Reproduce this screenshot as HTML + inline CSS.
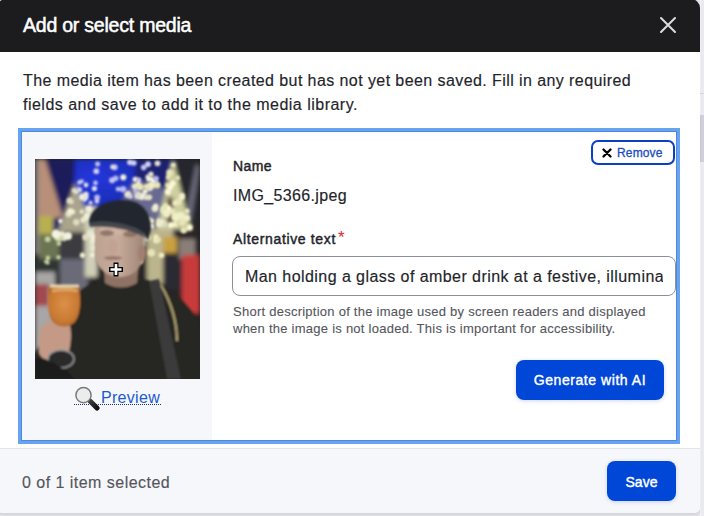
<!DOCTYPE html>
<html><head><meta charset="utf-8">
<style>
*{box-sizing:border-box;margin:0;padding:0}
html,body{width:704px;height:516px;overflow:hidden;background:#e3e3e9;font-family:"Liberation Sans",sans-serif;color:#232429}
.abs{position:absolute}
#strip1{left:700px;top:0;width:4px;height:516px;background:linear-gradient(90deg,#f4f4f8 0,#f4f4f8 1px,#eaeaf0 1px);}
#strip3{left:700px;top:93px;width:4px;height:1px;background:#d8d8de}
#strip2{left:700px;top:115px;width:4px;height:47px;background:#cfd0d8}
#dlg{left:-3px;top:-1px;width:703px;height:513.5px;background:#fff;border-radius:9px 9px 6px 6px;overflow:hidden;box-shadow:0 2px 3px rgba(20,20,40,.08)}
#w{left:3px;top:-1px;width:700px;height:516px}
#hdr{left:-3px;top:0;width:703px;height:54px;background:#1c1c1e}
#title{left:23px;top:16px;font-size:19.5px;letter-spacing:-0.22px;-webkit-text-stroke:0.5px #fff;color:#fff;line-height:22px;white-space:nowrap}
#close{left:660px;top:19px}
#msg{-webkit-text-stroke:0.15px #232429;left:23px;top:71px;font-size:16px;letter-spacing:0.42px;line-height:24px;white-space:nowrap;color:#232429}
#card{left:21px;top:133px;width:656px;height:310px;border:1px solid #4f88de;outline:3px solid #66a4f0}
#leftcol{left:0;top:0;width:190px;height:308px;background:#f5f7fb}
#photo{left:13px;top:27px;width:165px;height:220px;overflow:hidden;background:#222}
.lbl{-webkit-text-stroke:0.45px #232429;font-size:14px;white-space:nowrap;color:#232429}
#ftr{left:-3px;top:450px;width:703px;height:70px;background:#f6f7fb;border-top:1px solid #e3e4ea}
.btn{background:#0047d8;color:#fff;border-radius:8px;-webkit-text-stroke:0.4px #fff;font-size:14px;text-align:center;white-space:nowrap;box-shadow:0 1px 4px rgba(0,40,160,.18)}
#count{-webkit-text-stroke:0.15px #55565c;left:25px;top:23.5px;letter-spacing:0.47px;font-size:16px;line-height:20px;color:#55565c;white-space:nowrap}
#save{left:610px;top:12px;width:69px;height:40px;line-height:42px}
#gen{left:494px;top:228px;width:148px;height:40px;line-height:40px;letter-spacing:0.55px}
#remove{left:569px;top:8px;width:84px;height:25px;border:2px solid #0a3fc9;border-radius:7px;background:#fff}
#remtxt{-webkit-text-stroke:0.3px #1f4fc6;letter-spacing:0.15px;position:absolute;left:24px;top:4px;font-size:12px;line-height:14px;color:#1a4cc4;white-space:nowrap}
#lname{left:211px;top:26px;line-height:16px;letter-spacing:0.4px}
#fname{-webkit-text-stroke:0.15px #232429;left:211px;top:55px;font-size:16px;letter-spacing:0.35px;line-height:18px;white-space:nowrap}
#lalt{left:211px;top:99px;line-height:16px;letter-spacing:0.65px}
#req{color:#d42a2a;-webkit-text-stroke:0;font-size:17px;letter-spacing:0;position:absolute;top:-1.5px;left:105px}
#inp{left:210px;top:124px;width:444px;height:40px;border:1px solid #8d9099;border-radius:8px;overflow:hidden;padding:0 12px}
#inptxt{-webkit-text-stroke:0.15px #232429;font-size:16px;letter-spacing:0.44px;padding-top:1px;line-height:38px;white-space:nowrap;overflow:hidden;color:#232429}
#desc{-webkit-text-stroke:0.1px #55565c;left:211px;top:171px;letter-spacing:0.25px;font-size:13px;line-height:17px;color:#55565c;white-space:nowrap}
#preview{left:52px;top:254px;white-space:nowrap;height:19px;width:87px;border-bottom:1px dotted #1c2f80}
#prevtxt{position:absolute;left:27px;top:2px;letter-spacing:0.3px;font-size:16px;line-height:20px;color:#1d5bd1}
#mag{position:absolute;left:0px;top:0px}
</style></head><body>
<div class="abs" id="strip1"></div>
<div class="abs" id="strip2"></div>
<div class="abs" id="strip3"></div>
<div class="abs" id="dlg"><div class="abs" id="w">
  <div class="abs" id="hdr"></div>
  <div class="abs" id="title">Add or select media</div>
  <svg class="abs" id="close" width="16" height="16" viewBox="0 0 16 16"><path d="M1 1L15 15M15 1L1 15" stroke="#dcdcdc" stroke-width="2" stroke-linecap="round"/></svg>
  <div class="abs" id="msg">The media item has been created but has not yet been saved. Fill in any required<br><span style="letter-spacing:0.49px">fields and save to add it to the media library.</span></div>
  <div class="abs" id="card">
    <div class="abs" id="leftcol">
      <div class="abs" id="photo"><svg width="165" height="220" viewBox="0 0 165 220">
<defs>
<filter id="b1" x="-10%" y="-10%" width="120%" height="120%"><feGaussianBlur stdDeviation="2.2"/></filter>
<filter id="b2" x="-10%" y="-10%" width="120%" height="120%"><feGaussianBlur stdDeviation="1.1"/></filter>
<filter id="b3" x="-50%" y="-50%" width="200%" height="200%"><feGaussianBlur stdDeviation="1"/></filter>
<radialGradient id="glass" cx="0.5" cy="0.45" r="0.6"><stop offset="0" stop-color="#dc9048"/><stop offset="0.75" stop-color="#c87832"/><stop offset="1" stop-color="#a86024"/></radialGradient>
<linearGradient id="face" x1="0" y1="0" x2="1" y2="0"><stop offset="0" stop-color="#bca290"/><stop offset="0.45" stop-color="#c8ac9c"/><stop offset="1" stop-color="#a08676"/></linearGradient>
<radialGradient id="sky" cx="0.42" cy="0.25" r="0.6"><stop offset="0" stop-color="#2236dc"/><stop offset="0.7" stop-color="#1c2cb0"/><stop offset="1" stop-color="#1a1c68"/></radialGradient>
</defs>
<g filter="url(#b1)">
<rect width="165" height="220" fill="#2a2826"/>
<!-- sky -->
<rect x="0" y="0" width="140" height="75" fill="url(#sky)"/>
<polygon points="8,0 40,0 38,55 28,60" fill="#1a1c5a"/>
<rect x="100" y="0" width="35" height="70" fill="#1e2070"/>
<polygon points="70,72 100,20 130,30 135,72" fill="#6a6a90"/>
<rect x="140" y="0" width="25" height="65" fill="#26262e"/>
<polygon points="161,5 165,8 156,62 150,60" fill="#6a6a7a"/>
<!-- tan roof left -->
<polygon points="0,0 10,0 28,58 0,62" fill="#b89078"/>
<rect x="0" y="0" width="4" height="95" fill="#8a8680"/>
<!-- lit tent left -->
<polygon points="40,24 20,80 62,80" fill="#aaa48c"/>
<!-- right tree -->
<polygon points="138,0 122,70 156,70" fill="#cfd0a0"/>
<rect x="132" y="38" width="6" height="28" fill="#5a3a34"/>
<!-- left bush / building -->
<rect x="4" y="57" width="14" height="18" fill="#b8b050"/>
<rect x="4" y="75" width="22" height="35" fill="#6c7452"/>
<rect x="0" y="100" width="28" height="14" fill="#2e3430"/>
<!-- people left -->
<rect x="24" y="73" width="34" height="32" fill="#3a3a40"/>
<rect x="25" y="100" width="28" height="32" fill="#6a6a78"/>
<!-- ground -->
<rect x="0" y="113" width="20" height="80" fill="#a8a6a6"/>
<rect x="0" y="125" width="14" height="22" fill="#a04850"/>
<!-- light area right of head -->
<rect x="112" y="70" width="26" height="55" fill="#bcb48c"/>
<rect x="128" y="78" width="14" height="18" fill="#c8a040"/>
<rect x="128" y="94" width="22" height="36" fill="#2c2c30"/>
<rect x="144" y="80" width="16" height="20" fill="#8a7e78"/>
<rect x="147" y="96" width="18" height="58" fill="#c83a3a"/>
<!-- left bright near face -->
<rect x="50" y="48" width="12" height="70" fill="#d0d0b8"/>
</g>
<g filter="url(#b3)"><circle cx="115.9" cy="19.5" r="2.3" fill="#f2f0d8"/><circle cx="102.5" cy="37.0" r="3.2" fill="#e8e6c8"/><circle cx="104.4" cy="62.2" r="2.2" fill="#e8e6c8"/><circle cx="102.8" cy="59.1" r="3.0" fill="#e8e6c8"/><circle cx="97.3" cy="51.1" r="3.1" fill="#dcdcd0"/><circle cx="106.5" cy="37.6" r="3.5" fill="#f2f0d8"/><circle cx="110.1" cy="32.3" r="2.6" fill="#f2f0d8"/><circle cx="100.3" cy="20.3" r="2.6" fill="#f2f0d8"/><circle cx="127.1" cy="63.1" r="2.5" fill="#f2f0d8"/><circle cx="94.0" cy="70.9" r="2.3" fill="#e8e6c8"/><circle cx="114.9" cy="29.6" r="2.7" fill="#dcdcd0"/><circle cx="113.5" cy="20.8" r="2.3" fill="#f2f0d8"/><circle cx="114.3" cy="38.3" r="2.8" fill="#e8e6c8"/><circle cx="102.3" cy="71.9" r="2.5" fill="#f2f0d8"/><circle cx="88.3" cy="18.3" r="3.1" fill="#f2f0d8"/><circle cx="102.9" cy="35.6" r="3.5" fill="#dcdcd0"/><circle cx="118.6" cy="21.9" r="3.1" fill="#fffbe6"/><circle cx="123.8" cy="61.4" r="2.5" fill="#e8e6c8"/><circle cx="108.7" cy="36.5" r="2.3" fill="#f2f0d8"/><circle cx="78.2" cy="54.9" r="3.4" fill="#dcdcd0"/><circle cx="120.0" cy="49.6" r="3.5" fill="#e8e6c8"/><circle cx="112.9" cy="18.0" r="2.5" fill="#f2f0d8"/><circle cx="128.7" cy="52.1" r="3.0" fill="#e8e6c8"/><circle cx="102.1" cy="67.6" r="2.7" fill="#fffbe6"/><circle cx="94.8" cy="56.4" r="3.6" fill="#f2f0d8"/><circle cx="92.8" cy="35.3" r="3.5" fill="#e8e6c8"/><circle cx="115.9" cy="67.1" r="3.2" fill="#f2f0d8"/><circle cx="120.7" cy="47.2" r="2.7" fill="#f2f0d8"/><circle cx="129.5" cy="65.0" r="2.7" fill="#dcdcd0"/><circle cx="49.7" cy="41.0" r="2.1" fill="#c8c8f0"/><circle cx="46.8" cy="22.2" r="2.0" fill="#c8c8f0"/><circle cx="50.9" cy="35.4" r="2.9" fill="#e0e0f0"/><circle cx="59.7" cy="29.2" r="2.1" fill="#c8c8f0"/><circle cx="51.4" cy="38.8" r="2.3" fill="#e0e0f0"/><circle cx="51.0" cy="26.0" r="2.4" fill="#e0e0f0"/><circle cx="44.4" cy="30.8" r="2.8" fill="#c8c8f0"/><circle cx="59.4" cy="29.6" r="2.6" fill="#e0e0f0"/><circle cx="44.6" cy="23.4" r="2.4" fill="#c8c8f0"/><circle cx="55.6" cy="43.8" r="2.3" fill="#c8c8f0"/></g><g filter="url(#b3)"><circle cx="79.7" cy="8.3" r="3.0" fill="#c4c4f4"/><circle cx="113.0" cy="5.2" r="2.9" fill="#d0d0f0"/><circle cx="60.5" cy="23.9" r="2.3" fill="#c4c4f4"/><circle cx="94.9" cy="3.3" r="2.9" fill="#d0d0f0"/><circle cx="100.3" cy="32.1" r="2.3" fill="#b8b8f0"/><circle cx="61.3" cy="12.2" r="2.9" fill="#d0d0f0"/><circle cx="77.4" cy="7.9" r="2.3" fill="#e8e4d0"/><circle cx="95.5" cy="37.5" r="2.3" fill="#d0d0f0"/><circle cx="83.0" cy="30.1" r="2.3" fill="#c4c4f4"/><circle cx="99.5" cy="27.3" r="2.8" fill="#e8e4d0"/><circle cx="89.2" cy="50.8" r="2.6" fill="#d0d0f0"/><circle cx="111.2" cy="38.4" r="2.5" fill="#e8e4d0"/><circle cx="93.2" cy="48.1" r="3.1" fill="#e8e4d0"/><circle cx="98.8" cy="4.0" r="2.8" fill="#d0d0f0"/><circle cx="108.7" cy="8.4" r="2.8" fill="#c4c4f4"/><circle cx="122.5" cy="4.3" r="2.9" fill="#e8e4d0"/><circle cx="80.8" cy="19.3" r="2.8" fill="#b8b8f0"/><circle cx="62.6" cy="5.1" r="2.5" fill="#c4c4f4"/><circle cx="62.1" cy="38.6" r="3.0" fill="#b8b8f0"/><circle cx="77.1" cy="21.2" r="3.0" fill="#c4c4f4"/><circle cx="121.0" cy="19.6" r="2.9" fill="#b8b8f0"/><circle cx="61.9" cy="42.3" r="2.4" fill="#d0d0f0"/><circle cx="84.7" cy="50.4" r="2.8" fill="#d0d0f0"/><circle cx="88.1" cy="30.2" r="3.3" fill="#b8b8f0"/><circle cx="115.9" cy="15.3" r="2.7" fill="#e8e4d0"/><circle cx="103.7" cy="20.9" r="2.5" fill="#c4c4f4"/><circle cx="142.7" cy="18.9" r="2.3" fill="#e8e6b8"/><circle cx="140.5" cy="43.9" r="2.7" fill="#f0eec8"/><circle cx="147.0" cy="37.1" r="3.0" fill="#fbf8d8"/><circle cx="154.6" cy="68.5" r="3.1" fill="#fbf8d8"/><circle cx="134.5" cy="28.7" r="2.4" fill="#fbf8d8"/><circle cx="134.8" cy="13.7" r="3.5" fill="#e8e6b8"/><circle cx="132.6" cy="26.2" r="2.4" fill="#e8e6b8"/><circle cx="138.3" cy="6.2" r="2.4" fill="#e8e6b8"/><circle cx="147.1" cy="37.2" r="2.5" fill="#fbf8d8"/><circle cx="133.2" cy="49.7" r="3.4" fill="#fbf8d8"/><circle cx="130.5" cy="46.3" r="2.4" fill="#e8e6b8"/><circle cx="139.8" cy="65.4" r="2.7" fill="#f0eec8"/><circle cx="140.4" cy="56.1" r="2.7" fill="#f0eec8"/><circle cx="143.8" cy="56.8" r="3.2" fill="#f0eec8"/><circle cx="151.9" cy="58.9" r="3.2" fill="#f0eec8"/><circle cx="148.7" cy="71.3" r="3.2" fill="#e8e6b8"/><circle cx="128.9" cy="49.9" r="3.4" fill="#e8e6b8"/><circle cx="152.0" cy="52.1" r="2.7" fill="#e8e6b8"/><circle cx="137.7" cy="24.3" r="2.9" fill="#fbf8d8"/><circle cx="145.4" cy="57.6" r="2.4" fill="#fbf8d8"/><circle cx="137.5" cy="53.5" r="2.4" fill="#f0eec8"/><circle cx="124.3" cy="65.1" r="3.3" fill="#f0eec8"/><circle cx="143.7" cy="42.9" r="2.9" fill="#e8e6b8"/><circle cx="140.9" cy="60.1" r="2.4" fill="#fbf8d8"/><circle cx="132.9" cy="33.0" r="3.0" fill="#fbf8d8"/><circle cx="135.7" cy="66.1" r="2.9" fill="#fbf8d8"/><circle cx="143.6" cy="55.9" r="2.5" fill="#f0eec8"/><circle cx="137.9" cy="52.2" r="3.0" fill="#e8e6b8"/><circle cx="146.7" cy="38.2" r="2.9" fill="#f0eec8"/><circle cx="139.3" cy="58.1" r="2.9" fill="#f0eec8"/><circle cx="147.4" cy="63.1" r="3.4" fill="#e8e6b8"/><circle cx="135.5" cy="28.3" r="2.7" fill="#fbf8d8"/><circle cx="146.1" cy="56.4" r="3.4" fill="#f0eec8"/><circle cx="133.4" cy="18.2" r="2.5" fill="#e8e6b8"/><circle cx="28.1" cy="79.2" r="2.5" fill="#e0dcc0"/><circle cx="25.5" cy="62.1" r="2.3" fill="#f4f0d8"/><circle cx="37.9" cy="52.9" r="2.4" fill="#ecead0"/><circle cx="34.8" cy="42.3" r="2.6" fill="#f4f0d8"/><circle cx="46.7" cy="52.7" r="2.1" fill="#ecead0"/><circle cx="33.6" cy="55.2" r="3.1" fill="#e0dcc0"/><circle cx="50.6" cy="78.3" r="3.2" fill="#e0dcc0"/><circle cx="41.0" cy="32.7" r="2.4" fill="#ecead0"/><circle cx="48.3" cy="61.0" r="2.8" fill="#f4f0d8"/><circle cx="41.3" cy="63.3" r="3.2" fill="#e0dcc0"/><circle cx="27.1" cy="74.9" r="2.9" fill="#ecead0"/><circle cx="36.6" cy="42.9" r="2.1" fill="#ecead0"/><circle cx="35.5" cy="52.4" r="3.2" fill="#f4f0d8"/><circle cx="39.1" cy="31.5" r="2.5" fill="#e0dcc0"/><circle cx="34.8" cy="41.7" r="3.2" fill="#e0dcc0"/><circle cx="29.2" cy="79.9" r="2.4" fill="#e0dcc0"/><circle cx="48.9" cy="60.1" r="2.6" fill="#e8e6d0"/><circle cx="54.0" cy="50.1" r="3.3" fill="#f0eed8"/><circle cx="47.5" cy="96.3" r="2.7" fill="#f0eed8"/><circle cx="52.3" cy="57.5" r="3.4" fill="#f0eed8"/><circle cx="55.4" cy="74.7" r="3.6" fill="#e8e6d0"/><circle cx="58.2" cy="89.1" r="3.2" fill="#e8e6d0"/><circle cx="57.6" cy="83.2" r="2.6" fill="#e8e6d0"/><circle cx="57.7" cy="95.9" r="2.7" fill="#f0eed8"/><circle cx="59.2" cy="78.8" r="3.8" fill="#f0eed8"/><circle cx="47.4" cy="38.1" r="3.5" fill="#f0eed8"/><circle cx="113.9" cy="60.6" r="2.6" fill="#f0eec8"/><circle cx="121.2" cy="81.3" r="3.1" fill="#f0eec8"/><circle cx="116.3" cy="26.3" r="3.7" fill="#f0eec8"/><circle cx="122.1" cy="25.9" r="3.5" fill="#e8e4b8"/><circle cx="126.5" cy="96.2" r="2.8" fill="#f0eec8"/><circle cx="109.7" cy="78.5" r="3.1" fill="#e8e4b8"/><circle cx="105.2" cy="101.9" r="2.9" fill="#f0eec8"/><circle cx="120.9" cy="77.8" r="2.6" fill="#f0eec8"/><circle cx="112.6" cy="78.6" r="3.4" fill="#f0eec8"/><circle cx="103.4" cy="25.5" r="2.8" fill="#f0eec8"/><circle cx="123.1" cy="80.8" r="2.9" fill="#e8e4b8"/><circle cx="116.5" cy="62.0" r="2.7" fill="#f0eec8"/><circle cx="112.0" cy="27.7" r="3.1" fill="#e8e4b8"/><circle cx="116.3" cy="93.8" r="3.8" fill="#e8e4b8"/><circle cx="131.8" cy="54.8" r="3.7" fill="#f0eec8"/><circle cx="105.2" cy="28.1" r="3.5" fill="#e8e4b8"/><circle cx="25.0" cy="79.4" r="2.8" fill="#c8d0a0"/><circle cx="23.5" cy="98.2" r="2.2" fill="#c8d0a0"/><circle cx="12.7" cy="80.2" r="2.9" fill="#c8d0a0"/><circle cx="12.9" cy="99.0" r="2.4" fill="#c8d0a0"/><circle cx="11.0" cy="102.7" r="2.0" fill="#c8d0a0"/><circle cx="22.5" cy="79.0" r="2.9" fill="#d8dcb0"/><circle cx="23.8" cy="84.6" r="2.4" fill="#c8d0a0"/><circle cx="12.6" cy="103.7" r="2.1" fill="#c8d0a0"/><circle cx="21" cy="75" r="4.5" fill="#f4f2e0"/><circle cx="33" cy="77" r="4" fill="#f4f2e0"/></g>
<g filter="url(#b2)">
<!-- jacket -->
<path d="M0,220 L0,195 C8,175 28,150 45,132 C58,122 66,120 76,120 L106,120 C125,122 142,135 155,150 C162,160 165,170 165,175 L165,220 Z" fill="#262524"/>
<!-- strap -->
<path d="M114,122 L124,120 L146,220 L132,220 Z" fill="#3a3a3a"/>
<path d="M126,126 C134,140 142,160 142,182" stroke="#b0a070" stroke-width="2.2" fill="none"/>
<!-- neck -->
<path d="M68,106 L104,106 L102,124 C92,130 80,130 70,124 Z" fill="#8e7264"/>
<!-- hair at side -->
<ellipse cx="104" cy="82" rx="7" ry="14" fill="#b8b0a6"/>
<!-- face -->
<path d="M60,60 C66,54 98,58 108,70 L109,98 C106,110 98,117 86,118 C72,118 62,110 60,98 Z" fill="url(#face)"/>
<ellipse cx="84" cy="68" rx="20" ry="8" fill="#d0b4a4" opacity="0.8"/>
<ellipse cx="72" cy="74" rx="7" ry="3" fill="#7a6052" opacity="0.7"/>
<ellipse cx="95" cy="75" rx="7" ry="3" fill="#7a6052" opacity="0.7"/>
<ellipse cx="78" cy="88" rx="5" ry="8" fill="#c0a090" opacity="0.7"/>
<ellipse cx="78" cy="99" rx="9" ry="2" fill="#7a5a50" opacity="0.6"/>
<ellipse cx="107" cy="94" rx="4" ry="9" fill="#a08070"/>
<!-- cap -->
<path d="M54,64 C54,50 70,41 88,41 C106,41 116,52 116,70 L113,82 C110,74 104,70 96,68 C82,64 66,62 54,66 Z" fill="#24262e"/>
<path d="M54,64 C70,60 92,64 106,72 L112,80 C100,72 80,67 55,68 Z" fill="#44464e"/>
<!-- hand -->
<path d="M4,178 C4,165 16,158 33,161 C38,170 36,188 32,200 C22,206 8,204 4,194 Z" fill="#c49a86"/>
<!-- glass bowl -->
<path d="M14,126 L44,126 C46,140 46,155 40,163 C34,169 24,169 18,163 C12,155 12,140 14,126 Z" fill="url(#glass)"/>
<path d="M15,127 L44,127" stroke="#e8d8b0" stroke-width="3"/><path d="M17,132 C25,130 35,130 43,132" stroke="#e0b070" stroke-width="3" fill="none" opacity="0.8"/>
<!-- glass foot -->
<ellipse cx="26" cy="200" rx="13" ry="9" fill="#2a2a2a" stroke="#9a9a9a" stroke-width="1.5"/>
<!-- sleeve -->
<path d="M0,200 C8,196 18,204 32,212 L40,220 L0,220 Z" fill="#1c1c1c"/>
</g>
<path d="M81,103.5 V117.5 M74,110.5 H88" stroke="#000" stroke-width="5"/>
<path d="M81,105 V116 M75.5,110.5 H86.5" stroke="#fff" stroke-width="2.6"/>
</svg>
</div>
      <div class="abs" id="preview"><svg id="mag" width="26" height="26" viewBox="0 0 26 26"><defs><linearGradient id="hg" x1="0" y1="0" x2="1" y2="1"><stop offset="0" stop-color="#3a3a3a"/><stop offset="1" stop-color="#111"/></linearGradient></defs><path d="M16.5 15.5L23 22" stroke="url(#hg)" stroke-width="5" stroke-linecap="round"/><circle cx="9.5" cy="9.2" r="7.6" fill="#ececec" stroke="#7a7a7a" stroke-width="1.5"/></svg><span id="prevtxt">Preview</span></div>
    </div>
    <div class="abs" id="remove"><svg width="10" height="10" viewBox="0 0 10 10" style="position:absolute;left:9px;top:6px"><path d="M1.5 1.5L8.5 8.5M8.5 1.5L1.5 8.5" stroke="#000" stroke-width="2.3" stroke-linecap="round"/></svg><span id="remtxt">Remove</span></div>
    <div class="abs lbl" id="lname">Name</div>
    <div class="abs" id="fname">IMG_5366.jpeg</div>
    <div class="abs lbl" id="lalt">Alternative text<span id="req">*</span></div>
    <div class="abs" id="inp"><div id="inptxt">Man holding a glass of amber drink at a festive, illumina</div></div>
    <div class="abs" id="desc">Short description of the image used by screen readers and displayed<br>when the image is not loaded. This is important for accessibility.</div>
    <div class="abs btn" id="gen">Generate with AI</div>
  </div>
  <div class="abs" id="ftr">
    <div class="abs" id="count">0 of 1 item selected</div>
    <div class="abs btn" id="save">Save</div>
  </div>
</div></div>
</body></html>
